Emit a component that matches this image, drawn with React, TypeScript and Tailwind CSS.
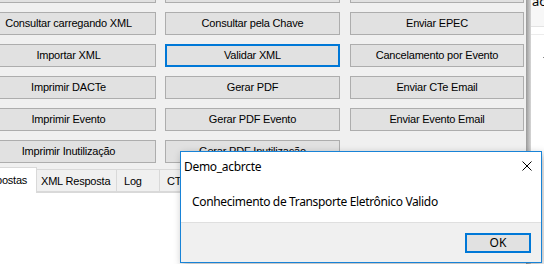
import React from 'react';

const btnFont = { fontFamily: '"Liberation Sans", Arial, sans-serif' };
const uiFont = { fontFamily: '"Noto Sans", "Open Sans", sans-serif' };

// a primeira linha fica quase toda fora da tela, só a borda inferior aparece
const columns: { id: string; label: string; focused?: boolean }[][] = [
  [
    { id: 'c1r0', label: '' },
    { id: 'c1r1', label: 'Consultar carregando XML' },
    { id: 'c1r2', label: 'Importar XML' },
    { id: 'c1r3', label: 'Imprimir DACTe' },
    { id: 'c1r4', label: 'Imprimir Evento' },
    { id: 'c1r5', label: 'Imprimir Inutilização' },
  ],
  [
    { id: 'c2r0', label: '' },
    { id: 'c2r1', label: 'Consultar pela Chave' },
    { id: 'c2r2', label: 'Validar XML', focused: true },
    { id: 'c2r3', label: 'Gerar PDF' },
    { id: 'c2r4', label: 'Gerar PDF Evento' },
    { id: 'c2r5', label: 'Gerar PDF Inutilização' },
  ],
  [
    { id: 'c3r0', label: '' },
    { id: 'c3r1', label: 'Enviar EPEC' },
    { id: 'c3r2', label: 'Cancelamento por Evento' },
    { id: 'c3r3', label: 'Enviar CTe Email' },
    { id: 'c3r4', label: 'Enviar Evento Email' },
  ],
];

const WinButton: React.FC<{ label: string; focused?: boolean }> = ({ label, focused }) => (
  <div
    className={`flex h-[23px] items-center justify-center bg-[#e1e1e1] text-[11px] tracking-[-0.2px] text-black ${
      focused ? 'border-2 border-[#0078d7]' : 'border border-[#adadad]'
    }`}
    style={btnFont}
  >
    {label}
  </div>
);

export default function App() {
  return (
    <div className="relative flex h-[264px] w-[544px] overflow-hidden bg-[#f0f0f0]">
      {/* formulário principal */}
      <div className="flex w-[526px] shrink-0 flex-col">
        <div className="ml-[-19px] mt-[-20px] flex">
          {columns.map((col, i) => (
            <div
              key={i}
              className={`flex flex-col gap-[9px] ${i === 2 ? 'ml-[10px] w-[174px]' : i === 1 ? 'ml-[9px] w-[175px]' : 'w-[175px]'}`}
            >
              {col.map((b) => (
                <WinButton key={b.id} label={b.label} focused={b.focused} />
              ))}
            </div>
          ))}
        </div>

        {/* abas */}
        <div className="ml-[-32px] mt-[4px] flex items-end text-[11px] tracking-[-0.2px] text-black" style={btnFont}>
          <div className="relative z-10 mb-[-1px] flex h-[26px] w-[69px] items-center border border-b-0 border-[#d9d9d9] bg-white pl-[8px]">
            Respostas
          </div>
          <div className="flex h-[23px] w-[80px] items-center border-y border-r border-[#d9d9d9] bg-[#f0f0f0] pl-[4px] pt-[2px]">
            XML Resposta
          </div>
          <div className="flex h-[23px] w-[43px] items-center border-y border-r border-[#d9d9d9] bg-[#f0f0f0] pl-[7px] pt-[2px]">
            Log
          </div>
          <div className="flex h-[23px] w-[60px] items-center border-y border-r border-[#d9d9d9] bg-[#f0f0f0] pl-[7px] pt-[2px]">
            CTe
          </div>
        </div>
        <div className="flex-1 border-t border-[#d9d9d9] bg-white" />
      </div>

      {/* painel lateral */}
      <div className="flex flex-1">
        <div className="w-[5px] bg-gradient-to-r from-[#9a9a9a] to-[#d6d6d6]" />
        <div className="relative flex-1 bg-white">
          <div className="h-[34px] border-b border-[#e3e3e3] bg-[#f7f7f7] pl-[1px] text-[13px] text-black" style={uiFont}>
            <div className="mt-[-7px] leading-[16px]">ao</div>
          </div>
          <div className="h-[8px] border-b border-[#ececec]" />
          <div className="absolute left-[12px] top-[57px] h-[1px] w-[2px] bg-[#888]" />
        </div>
      </div>

      {/* caixa de mensagem */}
      <div
        className="absolute left-[180px] top-[151px] flex h-[112px] w-[362px] flex-col border border-[#1883d7] bg-white shadow-[2px_3px_8px_rgba(0,0,0,0.3)]"
        style={uiFont}
      >
        <div className="flex h-[29px] items-center justify-between pl-[3px] pr-[9px] text-[12px] tracking-[-0.3px] text-black">
          <span>Demo_acbrcte</span>
          <svg width="10" height="10" viewBox="0 0 10 10" className="mt-[-2px]">
            <path d="M0.5 0.5 L9.5 9.5 M9.5 0.5 L0.5 9.5" stroke="#000" strokeWidth="1" />
          </svg>
        </div>
        <div className="flex h-[41px] items-center pl-[11px] text-[12px] tracking-[-0.35px] text-black">
          Conhecimento de Transporte Eletrônico Valido
        </div>
        <div className="flex flex-1 justify-end border-t border-[#dfdfdf] bg-[#f0f0f0] pr-[10px] pt-[10px]">
          <div className="flex h-[20px] w-[66px] items-center justify-center border-2 border-[#0078d7] bg-[#e1e1e1] text-[12px] text-black">
            OK
          </div>
        </div>
      </div>
    </div>
  );
}
